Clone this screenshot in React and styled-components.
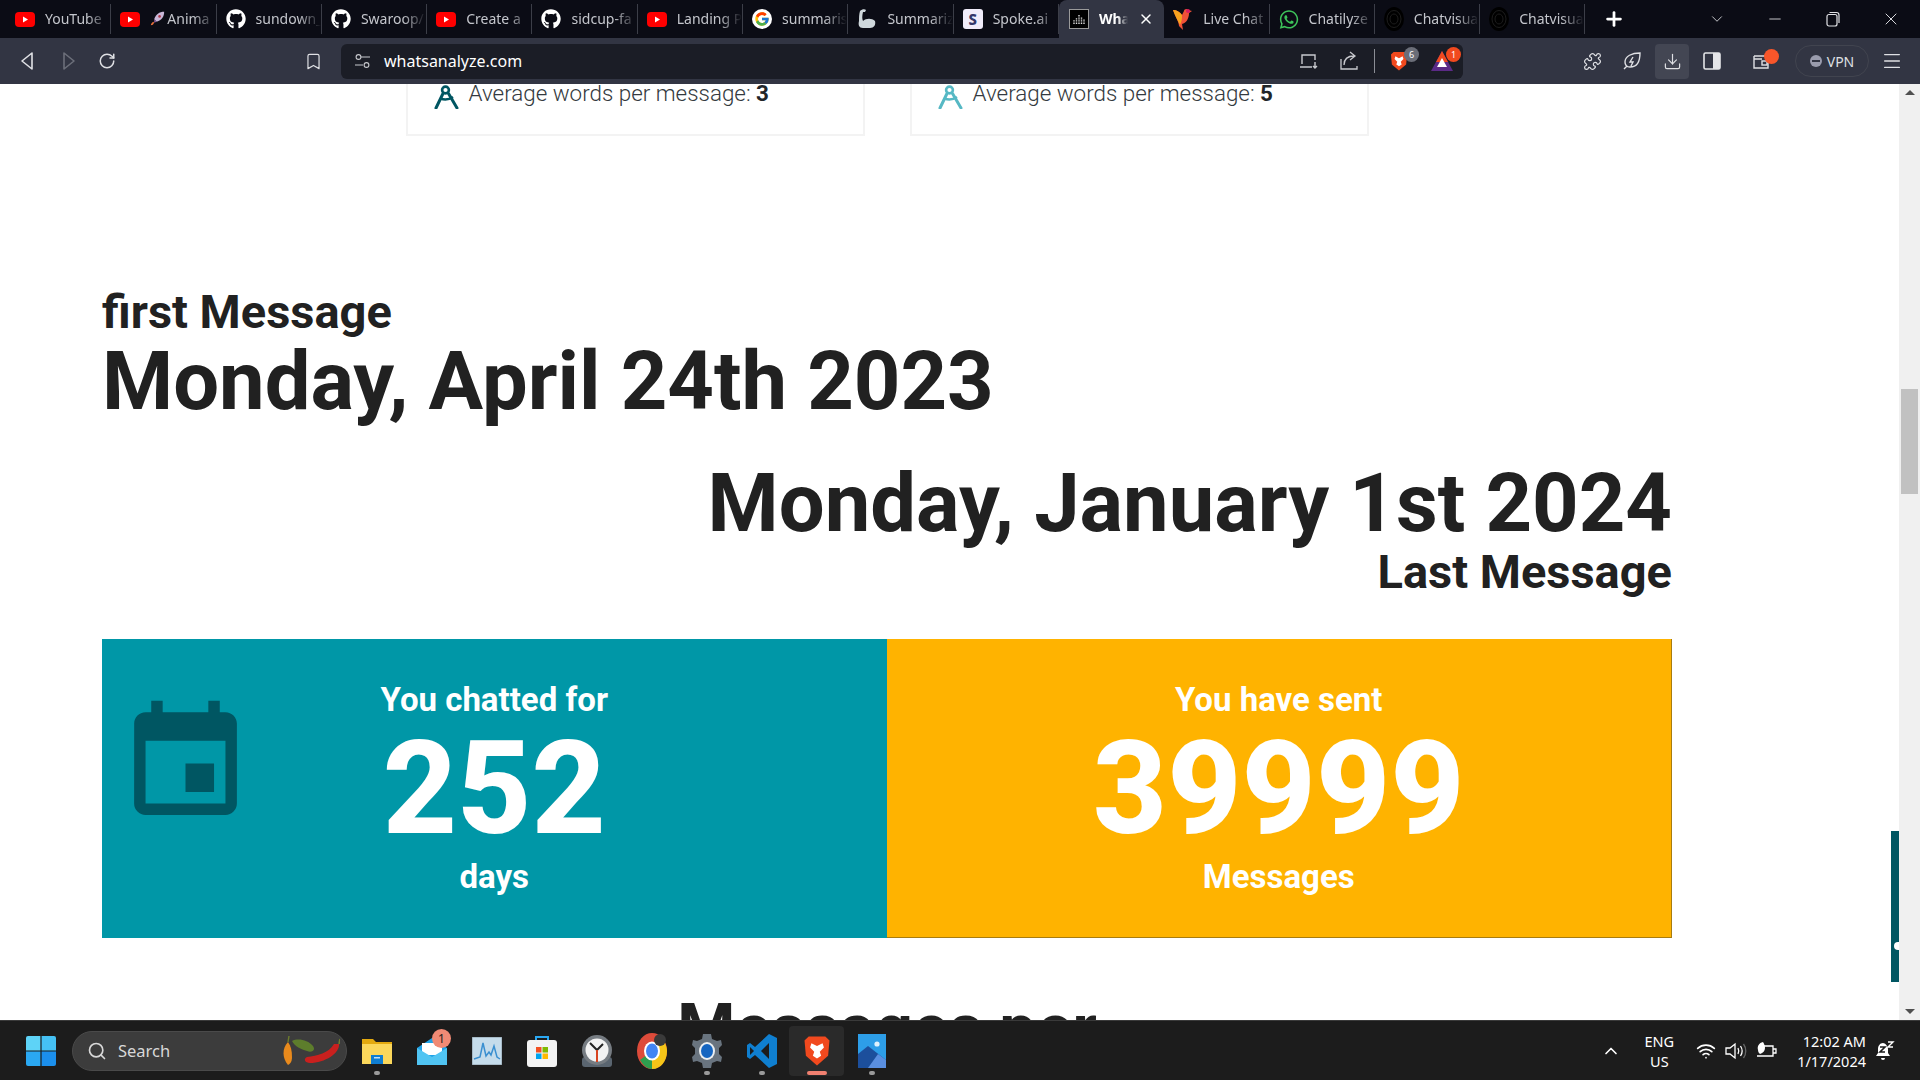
import React from 'react';
import styled, { createGlobalStyle } from 'styled-components';
import { FaGithub, FaWhatsapp } from 'react-icons/fa';
import { FcGoogle } from 'react-icons/fc';
import { MdEvent } from 'react-icons/md';
import { FiSearch } from 'react-icons/fi';
import {
  Bookmark, ChevronDown, ChevronUp, Download, Menu, Minus, Plus, Puzzle, RotateCw, Wifi, X,
} from 'lucide-react';

const GlobalStyle = createGlobalStyle`
  html, body {
    margin: 0;
    height: 100%;
    overflow: hidden;
    background: #fff;
  }
  * { box-sizing: border-box; }
`;

const Shell = styled.div`
  width: 1920px;
  height: 1080px;
  display: flex;
  flex-direction: column;
  font-family: Roboto, "Liberation Sans", sans-serif;
  overflow: hidden;
`;

/* browser tabs */
const TabStrip = styled.div`
  height: 38px;
  flex: none;
  background: #0b0c15;
  display: flex;
  align-items: stretch;
  padding-left: 6px;
  font-family: "Noto Sans", sans-serif;
`;
const Tab = styled.div`
  width: 105.3px;
  height: ${(p) => (p.$active ? '38px' : '30px')};
  margin-top: ${(p) => (p.$active ? '0' : '4px')};
  padding: ${(p) => (p.$active ? '0 0 0 10px' : '0 0 0 9px')};
  display: flex;
  align-items: center;
  gap: 10px;
  font-size: 14px;
  font-weight: ${(p) => (p.$active ? 700 : 400)};
  color: ${(p) => (p.$active ? '#fff' : '#c4c6cc')};
  background: ${(p) => (p.$active ? '#323543' : 'transparent')};
  border-radius: ${(p) => (p.$active ? '8px 8px 0 0' : '0')};
  border-right: ${(p) => (p.$plain ? '0' : '1px solid #3c3e48')};
`;
const TabLabel = styled.span`
  flex: 1;
  min-width: 0;
  display: flex;
  align-items: center;
  gap: 2px;
  margin-top: -1px;
  white-space: nowrap;
  overflow: hidden;
  -webkit-mask-image: linear-gradient(90deg, #000 65%, transparent 100%);
  mask-image: linear-gradient(90deg, #000 65%, transparent 100%);
`;
const TabIcon = styled.span`
  width: 20px;
  height: 20px;
  flex: none;
  display: flex;
  align-items: center;
  justify-content: center;
  color: #fff;
`;
const TabClose = styled(X)`
  margin-right: 10px;
  flex: none;
  color: #fff;
`;
const NewTab = styled.div`
  width: 58px;
  display: flex;
  align-items: center;
  justify-content: center;
  color: #fff;
`;
const WindowControls = styled.div`
  margin-left: auto;
  display: flex;
  align-items: center;
  color: #d8d9dd;
`;
const WindowButton = styled.div`
  width: 58px;
  display: flex;
  justify-content: center;
`;
const SpokeBadge = styled.span`
  width: 20px;
  height: 20px;
  border-radius: 3px;
  background: #f0ecfa;
  color: #34386a;
  font: 800 15px/20px "Noto Sans", sans-serif;
  text-align: center;
`;

/* address bar row */
const Toolbar = styled.div`
  height: 46px;
  flex: none;
  background: #323543;
  display: flex;
  align-items: center;
  color: #dfe0e4;
`;
const NavGroup = styled.div`
  width: 341px;
  flex: none;
  display: flex;
  align-items: center;
  padding-left: 18px;
  gap: 20px;
`;
const BookmarkSlot = styled.div`
  margin-left: auto;
  margin-right: 18px;
  display: flex;
`;
const UrlBar = styled.div`
  width: 1122px;
  height: 35px;
  flex: none;
  display: flex;
  align-items: center;
  padding: 0 9px 0 14px;
  gap: 14px;
  background: #1b1d26;
  border-radius: 6px;
  color: #fff;
  font: 16px "Noto Sans", sans-serif;
`;
const UrlActions = styled.div`
  margin-left: auto;
  display: flex;
  align-items: center;
  color: #c8c9ce;
`;
const UrlAction = styled.span`
  display: flex;
  position: relative;
  margin-left: ${(p) => p.$lead || 0}px;
`;
const UrlDivider = styled.span`
  width: 1px;
  height: 24px;
  margin-left: 16px;
  background: #8b8d95;
`;
const CountBadge = styled.span`
  position: absolute;
  top: ${(p) => p.$top}px;
  right: ${(p) => p.$right}px;
  width: 15px;
  height: 15px;
  border-radius: 50%;
  background: ${(p) => p.$bg};
  color: #fff;
  font: 9px/15px "Noto Sans", sans-serif;
  text-align: center;
`;
const ToolGroup = styled.div`
  flex: 1;
  display: flex;
  align-items: center;
  padding-left: 112px;
  color: #dfe0e4;
`;
const ToolButton = styled.div`
  width: 34px;
  height: 35px;
  margin-right: ${(p) => p.$gap ?? 6}px;
  display: flex;
  align-items: center;
  justify-content: center;
  border-radius: 4px;
  background: ${(p) => (p.$on ? '#434653' : 'transparent')};
`;
const VpnPill = styled.div`
  width: 74px;
  height: 32px;
  margin: 0 6px 0 10px;
  display: flex;
  align-items: center;
  justify-content: center;
  gap: 5px;
  border: 1px solid #41444f;
  border-radius: 16px;
  font: 14px "Noto Sans", sans-serif;
  color: #dfe0e4;
`;
const VpnDot = styled.span`
  width: 12px;
  height: 12px;
  border-radius: 50%;
  background: #9a9cad;
  display: flex;
  align-items: center;
  justify-content: center;
  &::after {
    content: '';
    width: 8px;
    height: 2px;
    background: #323543;
  }
`;

/* page */
const Viewport = styled.div`
  height: 936px;
  flex: none;
  display: flex;
  position: relative;
  background: #fff;
`;
const Page = styled.main`
  flex: 1;
  min-width: 0;
  height: 100%;
  overflow: hidden;
  padding-left: 102px;
  color: #212121;
`;
const Container = styled.div`
  width: 1570px;
`;
const StatRow = styled.div`
  display: flex;
  justify-content: center;
  gap: 45px;
`;
const StatCard = styled.div`
  width: 459px;
  height: 52px;
  padding-left: 26px;
  display: flex;
  align-items: flex-start;
  gap: 10px;
  border: 2px solid #f3f3f3;
  border-top: 0;
  font-size: 22.4px;
  line-height: 18px;
  color: #343a40;
  font-weight: 300;
`;
const StatIcon = styled.svg`
  flex: none;
  width: 25px;
  height: 25px;
  stroke: ${(p) => p.$tint};
  fill: none;
  stroke-width: 3;
`;
const StatText = styled.div`
  white-space: nowrap;
  b { font-weight: 700; color: #212529; }
`;
const DateBlock = styled.section`
  margin-top: ${(p) => p.$top}px;
  text-align: ${(p) => p.$align};
`;
const DateLabel = styled.div`
  font-size: 47px;
  line-height: ${(p) => (p.$tight ? '44px' : '48px')};
  font-weight: 700;
`;
const DateValue = styled.div`
  font-size: 81.3px;
  line-height: 92px;
  font-weight: 700;
`;
const TotalsRow = styled.div`
  margin-top: 45px;
  display: flex;
  height: 299px;
`;
const TotalCard = styled.div`
  flex: 1;
  position: relative;
  display: flex;
  flex-direction: column;
  align-items: center;
  padding-top: 39px;
  color: #fff;
  background: ${(p) => p.$bg};
  border-right: ${(p) => (p.$edge ? '1px solid #a87c10' : '0')};
  border-bottom: ${(p) => (p.$edge ? '1px solid #a87c10' : '0')};
  font-size: 33px;
  line-height: 44px;
  font-weight: 700;
`;
const TotalNumber = styled.div`
  margin-top: 1px;
  font-size: 129px;
  line-height: 132px;
  font-weight: 800;
`;
const CardGlyph = styled(MdEvent)`
  position: absolute;
  left: 15px;
  top: 56px;
  color: #005662;
`;
const SectionTitle = styled.h2`
  margin: 50px 0 0;
  text-align: center;
  font-size: 66.4px;
  line-height: 80px;
  font-weight: 700;
`;
const Scrollbar = styled.div`
  width: 21px;
  flex: none;
  position: relative;
  background: #f0f0f0;
  display: flex;
  flex-direction: column;
  align-items: center;
  justify-content: space-between;
  padding: 6px 0;
`;
const ScrollThumb = styled.div`
  position: absolute;
  top: 305px;
  left: 2px;
  width: 17px;
  height: 105px;
  background: #c1c1c1;
`;
const ScrollArrow = styled.span`
  width: 0;
  height: 0;
  border-left: 5px solid transparent;
  border-right: 5px solid transparent;
  border-${(p) => (p.$down ? 'top' : 'bottom')}: 5px solid #505050;
`;
const SideTab = styled.div`
  position: absolute;
  right: 21px;
  top: 747px;
  width: 8px;
  height: 151px;
  background: #005662;
  &::after {
    content: '';
    position: absolute;
    left: 3px;
    bottom: 32px;
    width: 5px;
    height: 8px;
    border-radius: 5px 0 0 5px;
    background: #fff;
  }
`;

/* windows taskbar */
const Taskbar = styled.footer`
  height: 60px;
  flex: none;
  background: #1c1c1c;
  border-top: 1px solid #3a3a3a;
  display: flex;
  align-items: center;
  font-family: "Noto Sans", sans-serif;
  color: #fff;
`;
const StartButton = styled.div`
  width: 72px;
  flex: none;
  display: flex;
  justify-content: center;
  padding-left: 9px;
`;
const SearchPill = styled.div`
  width: 275px;
  height: 40px;
  flex: none;
  display: flex;
  align-items: center;
  gap: 11px;
  padding: 0 6px 0 14px;
  border-radius: 20px;
  background: #3c3c3c;
  border: 1px solid #4a4a4a;
  font-size: 16.5px;
  color: #d8d8d8;
`;
const PepperSlot = styled.span`
  margin-left: auto;
  display: flex;
`;
const TaskIcons = styled.div`
  display: flex;
  align-items: center;
  padding-left: 2px;
`;
const TaskIcon = styled.div`
  width: 55px;
  height: 50px;
  position: relative;
  display: flex;
  align-items: center;
  justify-content: center;
  border-radius: 4px;
  background: ${(p) => (p.$active ? '#2a2a2a' : 'transparent')};
  &::after {
    content: '';
    display: ${(p) => (p.$dot ? 'block' : 'none')};
    position: absolute;
    bottom: 1px;
    left: 50%;
    transform: translateX(-50%);
    width: ${(p) => (p.$active ? '20px' : '6px')};
    height: 4px;
    border-radius: 2px;
    background: ${(p) => (p.$active ? '#f08070' : '#9a9a9a')};
  }
`;
const MailBadge = styled.span`
  position: absolute;
  top: 3px;
  right: 8px;
  width: 19px;
  height: 19px;
  border-radius: 50%;
  background: #f08a75;
  color: #1c1c1c;
  font-size: 12px;
  line-height: 19px;
  text-align: center;
`;
const Tray = styled.div`
  margin-left: auto;
  display: flex;
  align-items: center;
  color: #fff;
  font-size: 14.5px;
`;
const TrayStack = styled.div`
  display: flex;
  flex-direction: column;
  align-items: ${(p) => p.$align || 'center'};
  line-height: 20px;
  margin: ${(p) => p.$margin};
`;
const TrayGlyphs = styled.div`
  display: flex;
  align-items: center;
  gap: 9px;
`;
const TrayEnd = styled.span`
  width: 25px;
`;

const YouTubeIcon = () => (
  <svg width="20" height="15" viewBox="0 0 20 15">
    <rect width="20" height="15" rx="4" fill="#f00" />
    <path d="M8 4.5l5 3-5 3z" fill="#fff" />
  </svg>
);
const RocketIcon = () => (
  <svg width="15" height="17" viewBox="0 0 18 18" style={{ flex: 'none' }}>
    <path d="M5 10C7 4 11 1 17 1c0 6-3 10-9 12z" fill="#c9b7d8" />
    <path d="M5 10l3 3-3 1z" fill="#8a5a9a" />
    <path d="M4 13c-2 1-3 3-3 4 2 0 3-1 4-3z" fill="#e8703a" />
    <circle cx="11.5" cy="6.5" r="1.6" fill="#b03a48" />
  </svg>
);
const ArmIcon = () => (
  <svg width="20" height="22" viewBox="0 0 20 22">
    <path d="M3 3c2-2 5-2 6-1l-1 2-2 0c-1 4-1 7 0 9 3-3 9-3 12 0 1 4-1 7-5 7H6c-4 0-5-3-4-7 0-3 0-7 1-10z" fill="#cfd8dc" />
  </svg>
);
const BarsIcon = () => (
  <svg width="20" height="20" viewBox="0 0 20 20">
    <rect x=".5" y=".5" width="19" height="19" fill="#000" stroke="#9a9a9a" />
    <path d="M5 15v-4M7.5 15V9M10 15V6M12.5 15V8M15 15v-5" stroke="#ddd" strokeWidth="1.4" strokeDasharray="1 .6" />
  </svg>
);
const BirdIcon = () => (
  <svg width="20" height="24" viewBox="0 0 20 24">
    <path d="M0 3c4 0 7 2 9 5l2-4c0-2 3-3 4-1l4 1-3 2c0 6-3 10-7 11l1 6-4-4C6 15 2 9 0 3z" fill="#ef5138" />
    <path d="M0 3c4 0 7 2 9 5 0 3 0 6-2 10C5 14 2 9 0 3z" fill="#f6a21e" />
    <circle cx="15" cy="4" r="2" fill="#d81b60" />
  </svg>
);
const RingsIcon = () => (
  <svg width="20" height="24" viewBox="0 0 20 24">
    <ellipse cx="10" cy="12" rx="10" ry="12" fill="#000" />
    <ellipse cx="10" cy="12" rx="7" ry="8.5" fill="none" stroke="#1d1d1d" />
    <ellipse cx="10" cy="12" rx="4" ry="5" fill="none" stroke="#1d1d1d" />
  </svg>
);
const TriangleNav = ({ dir, color }) => (
  <svg width="20" height="20" viewBox="0 0 20 20" fill="none" stroke={color} strokeWidth="1.6" strokeLinejoin="round">
    {dir === 'left' ? <path d="M14 2v16L4 10z" /> : <path d="M6 2v16l10-8z" />}
  </svg>
);
const SiteSettings = () => (
  <svg width="15" height="16" viewBox="0 0 15 16" fill="none" stroke="#c8c9ce" strokeWidth="1.1">
    <circle cx="3.5" cy="4" r="2.4" />
    <path d="M6 4h9M0 12h8" />
    <circle cx="11.5" cy="12" r="2.4" />
  </svg>
);
const LaptopDown = () => (
  <svg width="20" height="20" viewBox="0 0 20 20" fill="none" stroke="currentColor" strokeWidth="1.4">
    <path d="M3 13V4h13v5M1 16h12M16 11v6M14 15l2 2 2-2" />
  </svg>
);
const ShareOut = () => (
  <svg width="18" height="20" viewBox="0 0 18 20" fill="none" stroke="currentColor" strokeWidth="1.3">
    <path d="M1 8v10h16v-3M4 14c0-6 4-9 10-9M10 1l5 4-5 4" />
  </svg>
);
const LeafBolt = () => (
  <svg width="20" height="20" viewBox="0 0 20 20" fill="none" stroke="currentColor" strokeWidth="1.4">
    <path d="M18 2c0 9-3 14-10 14-3 0-5-2-5-5 0-6 7-9 15-9zM2 18l3-3M11 6l-3 5h3l-2 4" />
  </svg>
);
const SidebarIcon = () => (
  <svg width="18" height="18" viewBox="0 0 18 18">
    <rect x="1" y="1" width="16" height="16" rx="1.5" fill="none" stroke="#e4e5e8" strokeWidth="1.6" />
    <rect x="10" y="1" width="7" height="16" fill="#e4e5e8" />
  </svg>
);
const WalletIcon = () => (
  <svg width="20" height="20" viewBox="0 0 20 20" fill="none" stroke="#dfe0e4" strokeWidth="1.4">
    <path d="M2 5h13v2M2 5v12h14v-5M2 8h8" />
    <rect x="10" y="10" width="5" height="4" />
  </svg>
);
const BraveLion = ({ size = 20 }) => (
  <svg width={size} height={size * 1.14} viewBox="0 0 20 23">
    <path d="M4 1h12l3 3-1 11-8 7-8-7L1 4z" fill="#f1491e" />
    <path d="M6 6l4 2 4-2 1 3-3 3 1 3-3 2-3-2 1-3-3-3z" fill="#fff" />
  </svg>
);
const BraveTriangle = () => (
  <svg width="24" height="22" viewBox="0 0 24 22">
    <path d="M12 1l11 20H1z" fill="#5b2a86" />
    <path d="M12 1l6 11H6z" fill="#f1491e" />
    <path d="M12 8l5 9H7z" fill="#fff" />
  </svg>
);
const WindowsLogo = () => (
  <svg width="30" height="30" viewBox="0 0 30 30">
    <path d="M2 0h12.4v14.4H0V2a2 2 0 0 1 2-2z" fill="#5ed3f7" />
    <path d="M15.6 0H28a2 2 0 0 1 2 2v12.4H15.6z" fill="#45c1f4" />
    <path d="M0 15.6h14.4V30H2a2 2 0 0 1-2-2z" fill="#2aa8f2" />
    <path d="M15.6 15.6H30V28a2 2 0 0 1-2 2H15.6z" fill="#1b8fec" />
  </svg>
);
const Peppers = () => (
  <svg width="58" height="32" viewBox="0 0 58 32">
    <path d="M6 7C0 13 0 23 6 30c2-1 4-3 4-8 0-6-1-11-4-15z" fill="#e98a1c" />
    <path d="M6 7l1-6" stroke="#6d7d2c" strokeWidth="1.4" />
    <path d="M10 6c6-3 16-1 21 5 3 4-1 7-6 5C19 14 13 12 10 6z" fill="#5d7d2c" />
    <path d="M57 9c1 9-14 19-29 19-5 0-7-4-3-6 10-1 22-4 27-13z" fill="#c9201e" />
    <path d="M57 9l1-5" stroke="#6d7d2c" strokeWidth="1.6" />
  </svg>
);
const FolderIcon = () => (
  <svg width="30" height="30" viewBox="0 0 30 30">
    <path d="M0 3h11l3 3h16v22H0z" fill="#e3a90f" />
    <rect y="8" width="30" height="20" fill="#fbd75b" />
    <rect x="9" y="19" width="12" height="9" fill="#0f7dd1" />
    <rect x="12" y="21" width="6" height="1.5" fill="#bfe0f7" />
  </svg>
);
const MailIcon = () => (
  <svg width="30" height="30" viewBox="0 0 30 30">
    <path d="M0 12L15 2l15 10v17H0z" fill="#1fa2e8" />
    <path d="M5 7h20v12H5z" fill="#fff" />
    <path d="M0 12l15 9 15-9v17H0z" fill="#50c4f2" />
  </svg>
);
const MonitorIcon = () => (
  <svg width="30" height="28" viewBox="0 0 30 28">
    <rect width="30" height="28" fill="#c5dceb" stroke="#8a9aa5" />
    <path d="M2 22l6-2 3-14 3 13 3-4 2 3 3-9 3 11 3 2" fill="none" stroke="#3a8fd0" strokeWidth="1.5" />
  </svg>
);
const StoreIcon = () => (
  <svg width="30" height="32" viewBox="0 0 30 32">
    <path d="M9 6V2h12v4" fill="none" stroke="#2aa8f2" strokeWidth="2" />
    <rect y="5" width="30" height="27" rx="3" fill="#f3f3f3" />
    <rect x="9" y="12" width="5.5" height="5.5" fill="#f25022" />
    <rect x="15.5" y="12" width="5.5" height="5.5" fill="#7fba00" />
    <rect x="9" y="18.5" width="5.5" height="5.5" fill="#00a4ef" />
    <rect x="15.5" y="18.5" width="5.5" height="5.5" fill="#ffb900" />
  </svg>
);
const ClockIcon = () => (
  <svg width="30" height="32" viewBox="0 0 30 32">
    <rect y="22" width="30" height="10" rx="3" fill="#5a6570" />
    <circle cx="15" cy="15" r="15" fill="#767c82" />
    <circle cx="15" cy="15" r="11.5" fill="#f2f2f2" />
    <path d="M8 8l7 7 6-6" fill="none" stroke="#222" strokeWidth="2" />
    <path d="M15 15v12" stroke="#d8431f" strokeWidth="2" />
  </svg>
);
const ChromeIcon = () => (
  <svg width="30" height="36" viewBox="0 0 30 36">
    <ellipse cx="15" cy="18" rx="15" ry="18" fill="#dd4b3a" />
    <path d="M3 27c3 5 7 9 12 9 3 0 6-1 8-4l-8-14z" fill="#2f9e4f" />
    <path d="M15 36c9 0 15-8 15-18 0-3-1-6-2-8H15z" fill="#f5c518" />
    <ellipse cx="15" cy="18" rx="8" ry="9.5" fill="#fff" />
    <ellipse cx="15" cy="18" rx="6" ry="7.5" fill="#4285f4" />
    <circle cx="23" cy="7" r="6" fill="#3a3a3a" />
  </svg>
);
const GearIcon = () => (
  <svg width="30" height="34" viewBox="0 0 30 34">
    <path d="M11 0h8l1 5 5 2 4-1 1 5-3 3v6l3 3-1 5-4-1-5 2-1 5h-8l-1-5-5-2-4 1-1-5 3-3v-6L0 11l1-5 4 1 5-2z" fill="#69747f" />
    <ellipse cx="15" cy="17" rx="8" ry="9" fill="#eceff1" />
    <ellipse cx="15" cy="17" rx="6" ry="7" fill="#1565c0" />
  </svg>
);
const VsCodeIcon = () => (
  <svg width="30" height="34" viewBox="0 0 30 34">
    <path d="M22 0l8 4v26l-8 4-14-13-5 4-3-2v-12l3-2 5 4z" fill="#0f7fd0" />
    <path d="M22 9l-8 8 8 8z" fill="#1c1c1c" />
    <path d="M3 13l4 4-4 4z" fill="#1c1c1c" />
  </svg>
);
const PhotosIcon = () => (
  <svg width="28" height="34" viewBox="0 0 28 34">
    <rect width="28" height="34" fill="#2d9ee8" />
    <path d="M0 34V20l10-8 18 14v8z" fill="#1c4f9c" />
    <path d="M10 34l10-14 8 6v8z" fill="#5a8fe0" />
    <circle cx="19" cy="10" r="2.6" fill="#dff2fd" />
  </svg>
);
const VolumeIcon = () => (
  <svg width="22" height="20" viewBox="0 0 22 20" fill="none" stroke="#fff" strokeWidth="1.3">
    <path d="M1 7v6h4l5 4V3L5 7z" />
    <path d="M13 7c1 2 1 4 0 6M15.5 5c2 3 2 7 0 10" />
    <path d="M18.5 3c3 4 3 10 0 14" stroke="#666" />
  </svg>
);
const LeafBattery = () => (
  <svg width="22" height="20" viewBox="0 0 22 20" fill="none" stroke="#fff" strokeWidth="1.3">
    <path d="M8 5h9v10H1M17 8h3v4h-3" />
    <path d="M7 1C3 2 1 5 2 9c0 2 1 3 2 4 3-1 5-3 5-6 0-3-1-4-2-6z" fill="#fff" stroke="none" />
  </svg>
);
const BellSnooze = () => (
  <svg width="20" height="22" viewBox="0 0 20 22">
    <path d="M8 3c-3 0-5 3-5 6v4l-2 3h14l-2-3V9c0-3-3-6-5-6zM6 18h4a2 2 0 0 1-4 0z" fill="#fff" />
    <path d="M5 7h5l-5 5h5" fill="none" stroke="#1c1c1c" strokeWidth="1.6" />
    <path d="M13 2h5l-5 5h5" fill="none" stroke="#fff" strokeWidth="1.4" />
  </svg>
);
const RestoreIcon = () => (
  <svg width="16" height="16" viewBox="0 0 16 16" fill="none" stroke="#e0e1e5" strokeWidth="1.2">
    <rect x="2" y="3.5" width="10" height="11.5" rx="2" />
    <path d="M4.5 1.5h7a2.5 2.5 0 0 1 2.5 2.5v8" />
  </svg>
);
const Compass = ({ tint }) => (
  <StatIcon viewBox="0 0 25 25" $tint={tint}>
    <path d="M9 9.5L2 24M14.5 9.5L23 24" strokeLinecap="round" />
    <circle cx="11.5" cy="6" r="3.4" strokeWidth="2.6" />
    <path d="M6.5 14.5c4 1.6 9 .8 12.5-1.5" strokeWidth="2.6" />
  </StatIcon>
);

const tabs = [
  { label: 'YouTube', icon: <YouTubeIcon /> },
  { label: 'Anima', icon: <YouTubeIcon />, rocket: true },
  { label: 'sundown_', icon: <FaGithub size={20} /> },
  { label: 'Swaroop/', icon: <FaGithub size={20} /> },
  { label: 'Create a', icon: <YouTubeIcon /> },
  { label: 'sidcup-fa', icon: <FaGithub size={20} /> },
  { label: 'Landing P', icon: <YouTubeIcon /> },
  { label: 'summaris', icon: <FcGoogle size={20} style={{ background: '#fff', borderRadius: '50%', padding: 2 }} /> },
  { label: 'Summariz', icon: <ArmIcon /> },
  { label: 'Spoke.ai', icon: <SpokeBadge>S</SpokeBadge> },
  { label: 'Wha', icon: <BarsIcon />, active: true },
  { label: 'Live Chat', icon: <BirdIcon /> },
  { label: 'Chatilyze', icon: <FaWhatsapp size={21} color="#3dc35a" /> },
  { label: 'Chatvisua', icon: <RingsIcon /> },
  { label: 'Chatvisua', icon: <RingsIcon /> },
];

const taskIcons = [
  { icon: <FolderIcon />, dot: true },
  { icon: <MailIcon />, badge: '1' },
  { icon: <MonitorIcon /> },
  { icon: <StoreIcon /> },
  { icon: <ClockIcon /> },
  { icon: <ChromeIcon /> },
  { icon: <GearIcon />, dot: true },
  { icon: <VsCodeIcon />, dot: true },
  { icon: <BraveLion size={28} />, dot: true, active: true },
  { icon: <PhotosIcon />, dot: true },
];

const Browser = () => (
  <>
    <TabStrip>
      {tabs.map((t, i) => (
        <Tab key={i} $active={t.active} $plain={t.active}>
          <TabIcon>{t.icon}</TabIcon>
          <TabLabel>
            {t.rocket && <RocketIcon />}
            {t.label}
          </TabLabel>
          {t.active && <TabClose size={16} strokeWidth={2.2} />}
        </Tab>
      ))}
      <NewTab><Plus size={22} strokeWidth={3} /></NewTab>
      <WindowControls>
        <WindowButton><ChevronDown size={18} strokeWidth={1.2} /></WindowButton>
        <WindowButton><Minus size={18} strokeWidth={1.2} /></WindowButton>
        <WindowButton><RestoreIcon /></WindowButton>
        <WindowButton><X size={20} strokeWidth={1.2} /></WindowButton>
      </WindowControls>
    </TabStrip>
    <Toolbar>
      <NavGroup>
        <TriangleNav dir="left" color="#e0e1e5" />
        <TriangleNav dir="right" color="#6c6f7a" />
        <RotateCw size={18} />
        <BookmarkSlot><Bookmark size={19} strokeWidth={1.5} /></BookmarkSlot>
      </NavGroup>
      <UrlBar>
        <SiteSettings />
        whatsanalyze.com
        <UrlActions>
          <UrlAction><LaptopDown /></UrlAction>
          <UrlAction $lead={21}><ShareOut /></UrlAction>
          <UrlDivider />
          <UrlAction $lead={15}>
            <BraveLion size={18} />
            <CountBadge $top={-4} $right={-11} $bg="#6b6e78">6</CountBadge>
          </UrlAction>
          <UrlAction $lead={22}>
            <BraveTriangle />
            <CountBadge $top={-3} $right={-7} $bg="#f1491e">1</CountBadge>
          </UrlAction>
        </UrlActions>
      </UrlBar>
      <ToolGroup>
        <ToolButton><Puzzle size={19} strokeWidth={1.5} /></ToolButton>
        <ToolButton><LeafBolt /></ToolButton>
        <ToolButton $on><Download size={19} strokeWidth={1.5} /></ToolButton>
        <ToolButton $gap={16}><SidebarIcon /></ToolButton>
        <ToolButton>
          <UrlAction>
            <WalletIcon />
            <CountBadge $top={-2} $right={-7} $bg="#f8562a" />
          </UrlAction>
        </ToolButton>
        <VpnPill><VpnDot />VPN</VpnPill>
        <ToolButton $gap={0}><Menu size={22} strokeWidth={1.5} /></ToolButton>
      </ToolGroup>
    </Toolbar>
  </>
);

const Windows = () => (
  <Taskbar>
    <StartButton><WindowsLogo /></StartButton>
    <SearchPill>
      <FiSearch size={20} />
      Search
      <PepperSlot><Peppers /></PepperSlot>
    </SearchPill>
    <TaskIcons>
      {taskIcons.map((t, i) => (
        <TaskIcon key={i} $dot={t.dot} $active={t.active}>
          {t.icon}
          {t.badge && <MailBadge>{t.badge}</MailBadge>}
        </TaskIcon>
      ))}
    </TaskIcons>
    <Tray>
      <ChevronUp size={20} strokeWidth={2} />
      <TrayStack $margin="0 22px 0 24px"><span>ENG</span><span>US</span></TrayStack>
      <TrayGlyphs>
        <Wifi size={20} />
        <VolumeIcon />
        <LeafBattery />
      </TrayGlyphs>
      <TrayStack $align="flex-end" $margin="0 9px 0 19px"><span>12:02 AM</span><span>1/17/2024</span></TrayStack>
      <BellSnooze />
      <TrayEnd />
    </Tray>
  </Taskbar>
);

const App = () => (
  <Shell>
    <GlobalStyle />
    <Browser />
    <Viewport>
      <Page>
        <Container>
          <StatRow>
            <StatCard>
              <Compass tint="#005662" />
              <StatText>Average words per message: <b>3</b></StatText>
            </StatCard>
            <StatCard>
              <Compass tint="#56b8c4" />
              <StatText>Average words per message: <b>5</b></StatText>
            </StatCard>
          </StatRow>
          <DateBlock $top={152} $align="left">
            <DateLabel>first Message</DateLabel>
            <DateValue>Monday, April 24th 2023</DateValue>
          </DateBlock>
          <DateBlock $top={30} $align="right">
            <DateValue>Monday, January 1st 2024</DateValue>
            <DateLabel $tight>Last Message</DateLabel>
          </DateBlock>
          <TotalsRow>
            <TotalCard $bg="#0097a7">
              <CardGlyph size={137} />
              You chatted for
              <TotalNumber>252</TotalNumber>
              days
            </TotalCard>
            <TotalCard $bg="#ffb300" $edge>
              You have sent
              <TotalNumber>39999</TotalNumber>
              Messages
            </TotalCard>
          </TotalsRow>
          <SectionTitle>Messages per</SectionTitle>
        </Container>
      </Page>
      <SideTab />
      <Scrollbar>
        <ScrollArrow />
        <ScrollThumb />
        <ScrollArrow $down />
      </Scrollbar>
    </Viewport>
    <Windows />
  </Shell>
);

export default App;
